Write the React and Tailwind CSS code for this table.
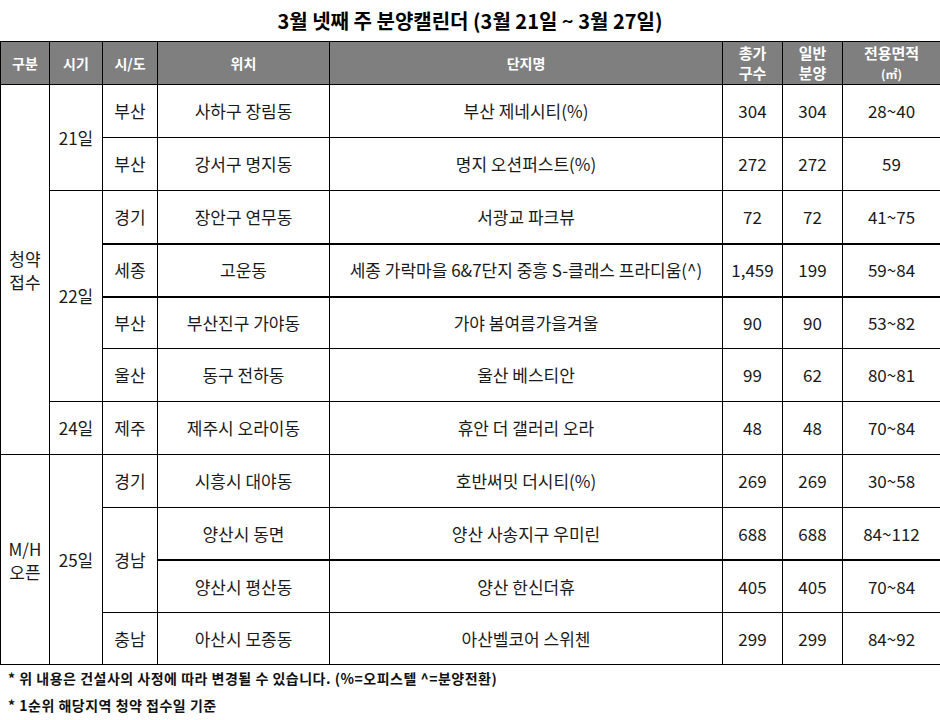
const FONT = { fontFamily: '"Malgun Gothic", "Noto Sans CJK KR", "Noto Sans", sans-serif' };

const rows = [
  { group: '청약\n접수', groupSpan: 7, day: '21일', daySpan: 2, region: '부산', loc: '사하구 장림동', name: '부산 제네시티(%)', total: '304', general: '304', area: '28~40', h: 'h-[53px]' },
  { region: '부산', loc: '강서구 명지동', name: '명지 오션퍼스트(%)', total: '272', general: '272', area: '59', h: 'h-[53px]' },
  { day: '22일', daySpan: 4, region: '경기', loc: '장안구 연무동', name: '서광교 파크뷰', total: '72', general: '72', area: '41~75', h: 'h-[53px]' },
  { region: '세종', loc: '고운동', name: '세종 가락마을 6&7단지 중흥 S-클래스 프라디움(^)', total: '1,459', general: '199', area: '59~84', h: 'h-[53px]', thick: true },
  { region: '부산', loc: '부산진구 가야동', name: '가야 봄여름가을겨울', total: '90', general: '90', area: '53~82', h: 'h-[52px]', thick: true },
  { region: '울산', loc: '동구 전하동', name: '울산 베스티안', total: '99', general: '62', area: '80~81', h: 'h-[53px]' },
  { day: '24일', daySpan: 1, region: '제주', loc: '제주시 오라이동', name: '휴안 더 갤러리 오라', total: '48', general: '48', area: '70~84', h: 'h-[53px]' },
  { group: 'M/H\n오픈', groupSpan: 4, day: '25일', daySpan: 4, region: '경기', loc: '시흥시 대야동', name: '호반써밋 더시티(%)', total: '269', general: '269', area: '30~58', h: 'h-[53px]' },
  { region: '경남', regionSpan: 2, loc: '양산시 동면', name: '양산 사송지구 우미린', total: '688', general: '688', area: '84~112', h: 'h-[52px]' },
  { noRegion: true, loc: '양산시 평산동', name: '양산 한신더휴', total: '405', general: '405', area: '70~84', h: 'h-[53px]', thick: true },
  { region: '충남', loc: '아산시 모종동', name: '아산벨코어 스위첸', total: '299', general: '299', area: '84~92', h: 'h-[52px]' },
];

const cell = 'border border-black text-center align-middle p-0';

function Header() {
  const th = 'border border-black bg-[#7f7f7f] text-white font-bold text-center align-middle p-0 text-[14px]';
  return (
    <tr className="h-[43px]">
      <th className={th}>구분</th>
      <th className={th}>시기</th>
      <th className={th}>시/도</th>
      <th className={th}>위치</th>
      <th className={th}>단지명</th>
      <th className={`${th} leading-[20px] text-[15px]`}>
        총가
        <br />
        구수
      </th>
      <th className={`${th} leading-[20px] text-[15px]`}>
        일반
        <br />
        분양
      </th>
      <th className={`${th} leading-[20px] text-[15px]`}>
        전용면적
        <br />
        <span className="text-[12px]">(㎡)</span>
      </th>
    </tr>
  );
}

export default function App() {
  return (
    <div className="w-[940px] h-[720px] bg-white text-[#1a1a1a]" style={FONT}>
      <h1 className="h-[41px] flex items-center justify-center text-[20px] font-bold text-black">
        3월 넷째 주 분양캘린더 (3월 21일 ~ 3월 27일)
      </h1>
      <table className="w-[940px] table-fixed border-collapse text-[17px]">
        <colgroup>
          <col className="w-[49px]" />
          <col className="w-[53px]" />
          <col className="w-[55px]" />
          <col className="w-[172px]" />
          <col className="w-[393px]" />
          <col className="w-[60px]" />
          <col className="w-[60px]" />
          <col className="w-[98px]" />
        </colgroup>
        <thead>
          <Header />
        </thead>
        <tbody>
          {rows.map((r, i) => {
            const t = r.thick ? 'border-t-2' : '';
            return (
              <tr key={i} className={r.h}>
                {r.group && (
                  <td rowSpan={r.groupSpan} className={`${cell} leading-[23px] whitespace-pre-line`}>
                    {r.group}
                  </td>
                )}
                {r.day && (
                  <td rowSpan={r.daySpan} className={cell}>
                    {r.day}
                  </td>
                )}
                {!r.noRegion && (
                  <td rowSpan={r.regionSpan || 1} className={`${cell} ${t}`}>
                    {r.region}
                  </td>
                )}
                <td className={`${cell} ${t}`}>{r.loc}</td>
                <td className={`${cell} ${t} whitespace-nowrap`}>{r.name}</td>
                <td className={`${cell} ${t}`}>{r.total}</td>
                <td className={`${cell} ${t}`}>{r.general}</td>
                <td className={`${cell} ${t}`}>{r.area}</td>
              </tr>
            );
          })}
        </tbody>
      </table>
      <div className="pl-[8px] text-[14px] font-bold text-[#111] leading-[27px] tracking-[0.5px]">
        <p>* 위 내용은 건설사의 사정에 따라 변경될 수 있습니다. (%=오피스텔 ^=분양전환)</p>
        <p>* 1순위 해당지역 청약 접수일 기준</p>
      </div>
    </div>
  );
}
